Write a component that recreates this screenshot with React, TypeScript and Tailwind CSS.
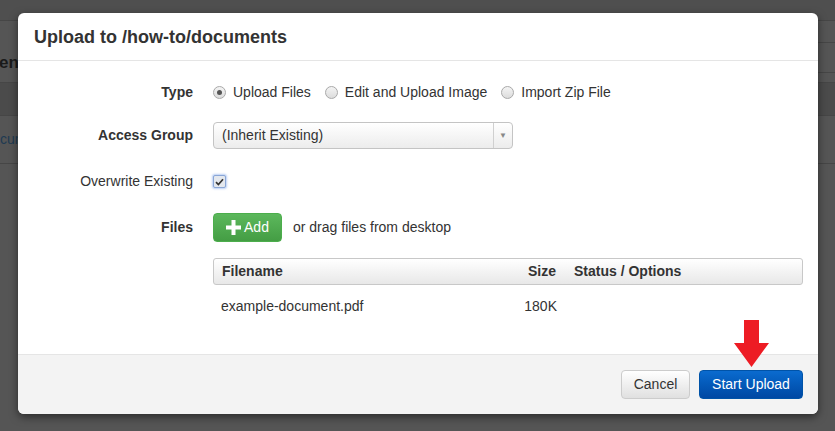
import React from "react"

function Radio({ checked }: { checked?: boolean }) {
  return (
    <span className="flex h-[13px] w-[13px] items-center justify-center rounded-full border border-[#a9a9a9] bg-gradient-to-b from-[#f4f4f4] to-[#dcdcdc]">
      {checked && <span className="h-[5px] w-[5px] rounded-full bg-[#555]" />}
    </span>
  )
}

export default function App() {
  return (
    <div
      className="relative h-[431px] w-[835px] overflow-hidden bg-[#555] text-[14px] text-[#333]"
      style={{ fontFamily: '"Liberation Sans", Arial, sans-serif' }}
    >
      {/* page behind the overlay */}
      <div className="flex flex-col">
        <div className="h-[21px] border-b border-[#464646] bg-[#4f4f4f]" />
        <div className="flex h-[62px] items-center border-b border-[#464646] pt-[22px] text-[17px] font-bold text-[#1a1a1a]">
          <span className="-ml-[1px]">ent</span>
        </div>
        <div className="h-[33px] border-b border-[#464646] bg-[#4b4b4b]" />
        <div className="flex h-[48px] items-center border-b border-[#464646] text-[14px] text-[#1e3a52]">
          <span>cum</span>
        </div>
      </div>
      <div className="absolute right-0 top-[42px] h-[1px] w-[20px] bg-[#464646]" />
      <div className="absolute right-0 top-[72px] h-[1px] w-[20px] bg-[#464646]" />

      {/* modal */}
      <div className="absolute left-[18px] top-[13px] flex h-[401px] w-[800px] flex-col rounded-[6px] bg-white shadow-[0_3px_9px_rgba(0,0,0,0.5)]">
        <div className="flex h-[48px] items-center border-b border-[#e5e5e5] px-[16px] pt-[2px] text-[18px] font-bold text-[#333]">
          Upload to /how-to/documents
        </div>

        <div className="flex flex-1 flex-col pt-[19px]">
          <div className="grid grid-cols-[175px_1fr] items-center gap-x-[20px]">
            <div className="text-right font-bold">Type</div>
            <div className="flex h-[24px] items-center">
              <Radio checked />
              <span className="ml-[7px]">Upload Files</span>
              <span className="ml-[14px]">
                <Radio />
              </span>
              <span className="ml-[7px]">Edit and Upload Image</span>
              <span className="ml-[14px]">
                <Radio />
              </span>
              <span className="ml-[7px]">Import Zip File</span>
            </div>
          </div>

          <div className="mt-[18px] grid grid-cols-[175px_1fr] items-center gap-x-[20px]">
            <div className="text-right font-bold">Access Group</div>
            <div className="flex h-[27px] w-[300px] items-center rounded-[4px] border border-[#c4c4c4] bg-gradient-to-b from-white to-[#ececec]">
              <span className="flex-1 pl-[8px]">(Inherit Existing)</span>
              <span className="flex h-full w-[19px] items-center justify-center border-l border-[#d0d0d0] text-[8px] text-[#888]">
                ▼
              </span>
            </div>
          </div>

          <div className="mt-[22px] grid grid-cols-[175px_1fr] items-center gap-x-[20px]">
            <div className="text-right">Overwrite Existing</div>
            <div className="flex h-[20px] items-center">
              <span className="flex h-[13px] w-[13px] items-center justify-center rounded-[2px] border border-[#8aa6d6] bg-[#e4e8ee] shadow-[0_0_2px_1px_rgba(140,175,235,0.6)]">
                <svg width="9" height="8" viewBox="0 0 9 8">
                  <path d="M1 4.2 L3.4 6.6 L8 1.2" stroke="#333" strokeWidth="1.7" fill="none" />
                </svg>
              </span>
            </div>
          </div>

          <div className="mt-[21px] grid grid-cols-[175px_1fr] items-center gap-x-[20px]">
            <div className="text-right font-bold">Files</div>
            <div className="flex h-[29px] items-center">
              <button className="flex h-[29px] w-[69px] items-center justify-center gap-[3px] rounded-[4px] border border-[#4cae4c] bg-gradient-to-b from-[#5cb85c] to-[#449d44] text-white">
                <svg width="15" height="15" viewBox="0 0 15 15">
                  <path d="M5.5 0h4v5.5H15v4H9.5V15h-4V9.5H0v-4h5.5z" fill="#fff" />
                </svg>
                <span>Add</span>
              </button>
              <span className="ml-[11px]">or drag files from desktop</span>
            </div>
          </div>

          <div className="ml-[195px] mr-[15px] mt-[16px]">
            <div className="flex h-[27px] items-center rounded-[3px] border border-[#c8c8c8] bg-gradient-to-b from-white to-[#e8e8e8] font-bold">
              <span className="flex-1 pl-[8px]">Filename</span>
              <span className="w-[60px] text-right">Size</span>
              <span className="w-[246px] pl-[18px]">Status / Options</span>
            </div>
            <div className="flex h-[42px] items-center">
              <span className="flex-1 pl-[8px]">example-document.pdf</span>
              <span className="w-[60px] text-right">180K</span>
              <span className="w-[246px]" />
            </div>
          </div>
        </div>

        <div className="flex h-[60px] items-center justify-end gap-[9px] rounded-b-[6px] border-t border-[#e5e5e5] bg-[#f3f3f3] pr-[15px]">
          <button className="h-[29px] w-[69px] rounded-[4px] border border-[#ccc] bg-gradient-to-b from-white to-[#e0e0e0] text-[#333]">
            Cancel
          </button>
          <button className="h-[29px] w-[104px] rounded-[4px] border border-[#0053a8] bg-gradient-to-b from-[#0b6bcf] to-[#0048a3] text-white">
            Start Upload
          </button>
        </div>
      </div>

      {/* red arrow */}
      <svg className="absolute left-[734px] top-[320px]" width="35" height="47" viewBox="0 0 35 47">
        <path d="M10 0h15v23h10L17.5 47 0 23h10z" fill="#ed1c24" />
      </svg>
    </div>
  )
}
